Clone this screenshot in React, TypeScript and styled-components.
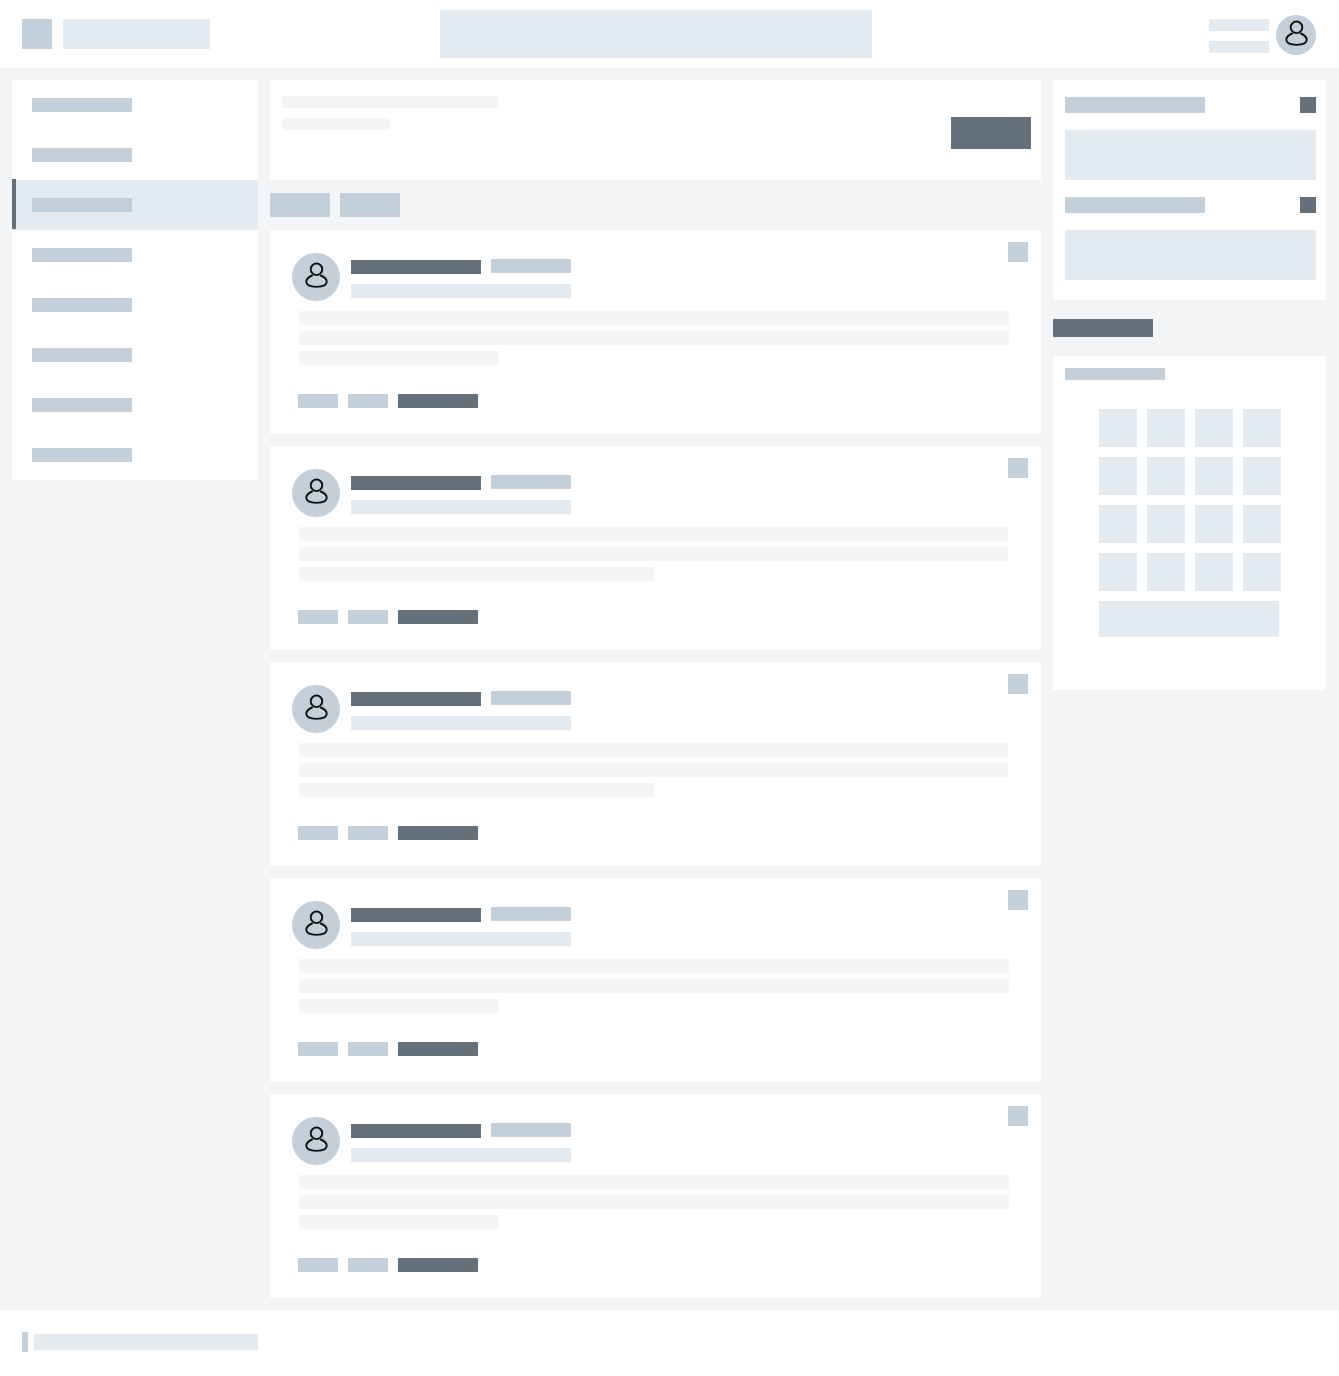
import styled, { createGlobalStyle } from "styled-components";

const DARK = "#64707a";
const MID = "#c3cfd9";
const LIGHT = "#e3eaf0";
const FAINT = "#f3f5f7";

const posts = [
  { lineWidth: 710, shortWidth: 200 },
  { lineWidth: 709, shortWidth: 355 },
  { lineWidth: 709, shortWidth: 355 },
  { lineWidth: 710, shortWidth: 200 },
  { lineWidth: 710, shortWidth: 200 },
];

const navItems = [0, 1, 2, 3, 4, 5, 6, 7];
const gridCells = Array.from({ length: 16 }, (_, i) => i);

function UserIcon() {
  return (
    <svg width={27} height={27} viewBox="0 0 28 28" fill="none" stroke="#111" strokeWidth="2" strokeLinecap="round">
      <circle cx="14" cy="7.6" r="6" />
      <path d="M9.4 14C6 15.4 3.4 17.4 3.4 20.6C3.4 24 8 25.8 14 25.8C20 25.8 24.6 24 24.6 20.6C24.6 17.4 22 15.4 18.6 14" />
    </svg>
  );
}

export default function App() {
  return (
    <>
      <GlobalStyle />
      <Page>
        <Header>
          <Brand>
            <Logo />
            <BrandName />
          </Brand>
          <Search />
          <Account>
            <AccountLines>
              <AccountLine />
              <AccountLine />
            </AccountLines>
            <HeaderAvatar>
              <UserIcon />
            </HeaderAvatar>
          </Account>
        </Header>

        <Main>
          <Sidebar>
            {navItems.map((i) => (
              <NavItem key={i} $active={i === 2}>
                <NavLabel />
              </NavItem>
            ))}
          </Sidebar>

          <Feed>
            <Intro>
              <IntroText>
                <IntroTitle />
                <IntroSub />
              </IntroText>
              <PrimaryButton />
            </Intro>
            <Tabs>
              <Tab />
              <Tab />
            </Tabs>
            <PostList>
              {posts.map((post, i) => (
                <Post key={i}>
                  <PostTop>
                    <PostAvatar>
                      <UserIcon />
                    </PostAvatar>
                    <PostMeta>
                      <NameRow>
                        <AuthorName />
                        <AuthorTag />
                      </NameRow>
                      <PostDate />
                    </PostMeta>
                    <PostMenu />
                  </PostTop>
                  <PostBody>
                    <BodyLine $width={post.lineWidth} />
                    <BodyLine $width={post.lineWidth} />
                    <BodyLine $width={post.shortWidth} />
                  </PostBody>
                  <PostActions>
                    <ActionButton />
                    <ActionButton />
                    <ActionLink />
                  </PostActions>
                </Post>
              ))}
            </PostList>
          </Feed>

          <Aside>
            <Panel>
              <PanelRow>
                <PanelTitle />
                <PanelIcon />
              </PanelRow>
              <PanelBlock />
              <PanelRow>
                <PanelTitle />
                <PanelIcon />
              </PanelRow>
              <PanelBlock />
            </Panel>
            <SectionTitle />
            <CalendarPanel>
              <CalendarTitle />
              <CalendarGrid>
                {gridCells.map((i) => (
                  <CalendarCell key={i} />
                ))}
              </CalendarGrid>
              <CalendarButton />
            </CalendarPanel>
          </Aside>
        </Main>

        <Footer>
          <FooterMark />
          <FooterText />
        </Footer>
      </Page>
    </>
  );
}

const GlobalStyle = createGlobalStyle`
  * {
    box-sizing: border-box;
  }

  body {
    margin: 0;
    background: #fff;
    font-family: "Liberation Sans", sans-serif;
  }
`;

const Page = styled.div`
  width: 1339px;
  min-height: 1376px;
  display: flex;
  flex-direction: column;
  background-color: ${FAINT};
`;

const Header = styled.header`
  height: 68px;
  display: grid;
  grid-template-columns: 440px 432px 1fr;
  align-items: center;
  background-color: #fff;
`;

const Brand = styled.div`
  display: flex;
  align-items: center;
  gap: 11px;
  padding-left: 22px;
`;

const Logo = styled.div`
  width: 30px;
  height: 30px;
  background-color: ${MID};
`;

const BrandName = styled.div`
  width: 147px;
  height: 30px;
  background-color: ${LIGHT};
`;

const Search = styled.div`
  height: 48px;
  background-color: ${LIGHT};
`;

const Account = styled.div`
  display: flex;
  justify-content: flex-end;
  align-items: flex-start;
  gap: 7px;
  padding: 1px 23px 0 0;
`;

const AccountLines = styled.div`
  display: flex;
  flex-direction: column;
  gap: 10px;
  padding-top: 4px;
`;

const AccountLine = styled.div`
  width: 60px;
  height: 12px;
  background-color: ${LIGHT};
`;

const HeaderAvatar = styled.div`
  width: 40px;
  height: 40px;
  display: flex;
  align-items: center;
  justify-content: center;
  padding-bottom: 2px;
  border-radius: 50%;
  background-color: ${MID};
`;

const Main = styled.main`
  flex: 1;
  display: grid;
  grid-template-columns: 246px 771px 273px;
  align-items: start;
  gap: 12px;
  padding: 12px;
`;

const Sidebar = styled.nav`
  background-color: #fff;
`;

const NavItem = styled.div<{ $active?: boolean }>`
  position: relative;
  height: 50px;
  display: flex;
  align-items: center;
  padding-left: 20px;
  background-color: ${(p) => (p.$active ? LIGHT : "#fff")};

  ${(p) =>
    p.$active &&
    `
    &::before {
      content: "";
      position: absolute;
      left: 0;
      top: -1px;
      width: 4px;
      height: 50px;
      background-color: ${DARK};
    }
  `}
`;

const NavLabel = styled.div`
  width: 100px;
  height: 14px;
  background-color: ${MID};
`;

const Feed = styled.section`
  display: flex;
  flex-direction: column;
`;

const Intro = styled.div`
  height: 100px;
  display: flex;
  justify-content: space-between;
  padding: 16px 10px 0 12px;
  background-color: #fff;
`;

const IntroText = styled.div`
  display: flex;
  flex-direction: column;
  gap: 10px;
`;

const IntroTitle = styled.div`
  width: 216px;
  height: 12px;
  background-color: ${FAINT};
`;

const IntroSub = styled.div`
  width: 108px;
  height: 12px;
  background-color: ${FAINT};
`;

const PrimaryButton = styled.div`
  width: 80px;
  height: 32px;
  margin-top: 21px;
  background-color: ${DARK};
`;

const Tabs = styled.div`
  height: 50px;
  display: flex;
  align-items: center;
  gap: 10px;
`;

const Tab = styled.div`
  width: 60px;
  height: 24px;
  background-color: ${MID};
`;

const PostList = styled.div`
  display: flex;
  flex-direction: column;
  gap: 12px;
`;

const Post = styled.article`
  height: 204px;
  background-color: #fff;
`;

const PostTop = styled.div`
  display: flex;
  align-items: flex-start;
  padding: 12px 13px 0 22px;
`;

const PostAvatar = styled.div`
  width: 48px;
  height: 48px;
  flex-shrink: 0;
  display: flex;
  align-items: center;
  justify-content: center;
  margin-top: 11px;
  padding-bottom: 3px;
  border-radius: 50%;
  background-color: ${MID};
`;

const PostMeta = styled.div`
  display: flex;
  flex-direction: column;
  gap: 10px;
  margin: 17px 0 0 11px;
`;

const NameRow = styled.div`
  display: flex;
  align-items: flex-start;
  gap: 10px;
  height: 15px;
`;

const AuthorName = styled.div`
  width: 130px;
  height: 14px;
  margin-top: 1px;
  background-color: ${DARK};
`;

const AuthorTag = styled.div`
  width: 80px;
  height: 14px;
  background-color: ${MID};
`;

const PostDate = styled.div`
  width: 220px;
  height: 14px;
  background-color: ${LIGHT};
`;

const PostMenu = styled.div`
  width: 20px;
  height: 20px;
  margin-left: auto;
  background-color: ${MID};
`;

const PostBody = styled.div`
  display: flex;
  flex-direction: column;
  gap: 6px;
  margin-top: 10px;
  padding-left: 29px;
`;

const BodyLine = styled.div<{ $width: number }>`
  width: ${(p) => p.$width}px;
  height: 14px;
  background-color: ${FAINT};
`;

const PostActions = styled.div`
  display: flex;
  gap: 10px;
  margin-top: 29px;
  padding-left: 28px;
`;

const ActionButton = styled.div`
  width: 40px;
  height: 14px;
  background-color: ${MID};
`;

const ActionLink = styled.div`
  width: 80px;
  height: 14px;
  background-color: ${DARK};
`;

const Aside = styled.aside`
  display: flex;
  flex-direction: column;
`;

const Panel = styled.div`
  display: flex;
  flex-direction: column;
  gap: 17px;
  padding: 17px 10px 20px 12px;
  background-color: #fff;
`;

const PanelRow = styled.div`
  display: flex;
  justify-content: space-between;
`;

const PanelTitle = styled.div`
  width: 140px;
  height: 16px;
  background-color: ${MID};
`;

const PanelIcon = styled.div`
  width: 16px;
  height: 16px;
  background-color: ${DARK};
`;

const PanelBlock = styled.div`
  height: 50px;
  background-color: ${LIGHT};
`;

const SectionTitle = styled.div`
  width: 100px;
  height: 18px;
  margin: 19px 0;
  background-color: ${DARK};
`;

const CalendarPanel = styled.div`
  height: 334px;
  padding: 12px;
  background-color: #fff;
`;

const CalendarTitle = styled.div`
  width: 100px;
  height: 12px;
  background-color: ${MID};
`;

const CalendarGrid = styled.div`
  display: grid;
  grid-template-columns: repeat(4, 38px);
  gap: 10px;
  margin: 29px 0 10px 34px;
`;

const CalendarCell = styled.div`
  height: 38px;
  background-color: ${LIGHT};
`;

const CalendarButton = styled.div`
  width: 180px;
  height: 36px;
  margin-left: 34px;
  background-color: ${LIGHT};
`;

const Footer = styled.footer`
  height: 66px;
  display: flex;
  align-items: center;
  gap: 6px;
  padding: 0 0 2px 22px;
  background-color: #fff;
`;

const FooterMark = styled.div`
  width: 6px;
  height: 20px;
  background-color: ${MID};
`;

const FooterText = styled.div`
  width: 224px;
  height: 16px;
  background-color: ${LIGHT};
`;
